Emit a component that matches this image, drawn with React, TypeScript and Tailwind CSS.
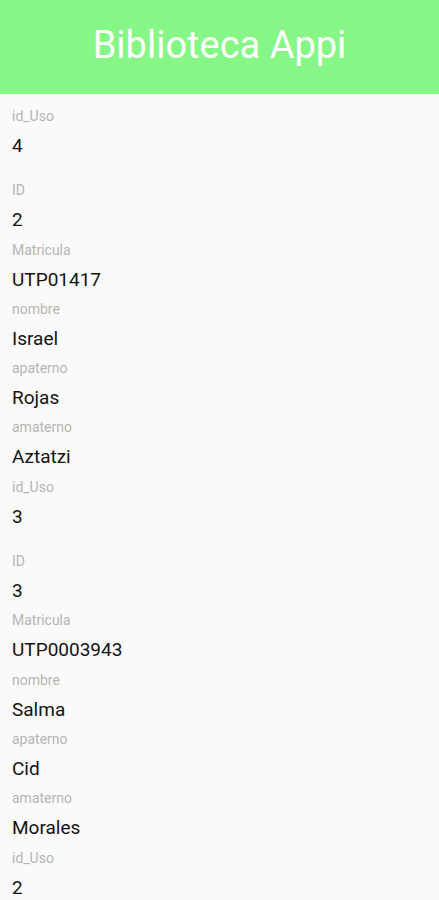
const records = [
  [
    ["ID", "2"],
    ["Matricula", "UTP01417"],
    ["nombre", "Israel"],
    ["apaterno", "Rojas"],
    ["amaterno", "Aztatzi"],
    ["id_Uso", "3"],
  ],
  [
    ["ID", "3"],
    ["Matricula", "UTP0003943"],
    ["nombre", "Salma"],
    ["apaterno", "Cid"],
    ["amaterno", "Morales"],
    ["id_Uso", "2"],
  ],
];

function Field({ label, value }: { label: string; value: string }) {
  return (
    <div className="pb-[8.3px]">
      <p className="text-[14px] leading-[18px] text-[#b5b5b5]">{label}</p>
      <p className="mt-[9px] text-[19px] leading-[24px] text-[#141414]">{value}</p>
    </div>
  );
}

export default function App() {
  return (
    <div className="min-h-[900px] w-full bg-[#fafafa] font-['Roboto',sans-serif]">
      <header className="flex h-[94px] items-center justify-center bg-[#86f786] pb-[4px]">
        <h1 className="text-[38px] text-white">Biblioteca Appi</h1>
      </header>

      <main className="px-3 pt-[13px]">
        {/* tail of the previous record */}
        <div className="mb-[15px]">
          <Field label="id_Uso" value="4" />
        </div>

        {records.map((fields, i) => (
          <div key={i} className="mb-[15px]">
            {fields.map(([label, value]) => (
              <Field key={label} label={label} value={value} />
            ))}
          </div>
        ))}
      </main>
    </div>
  );
}
